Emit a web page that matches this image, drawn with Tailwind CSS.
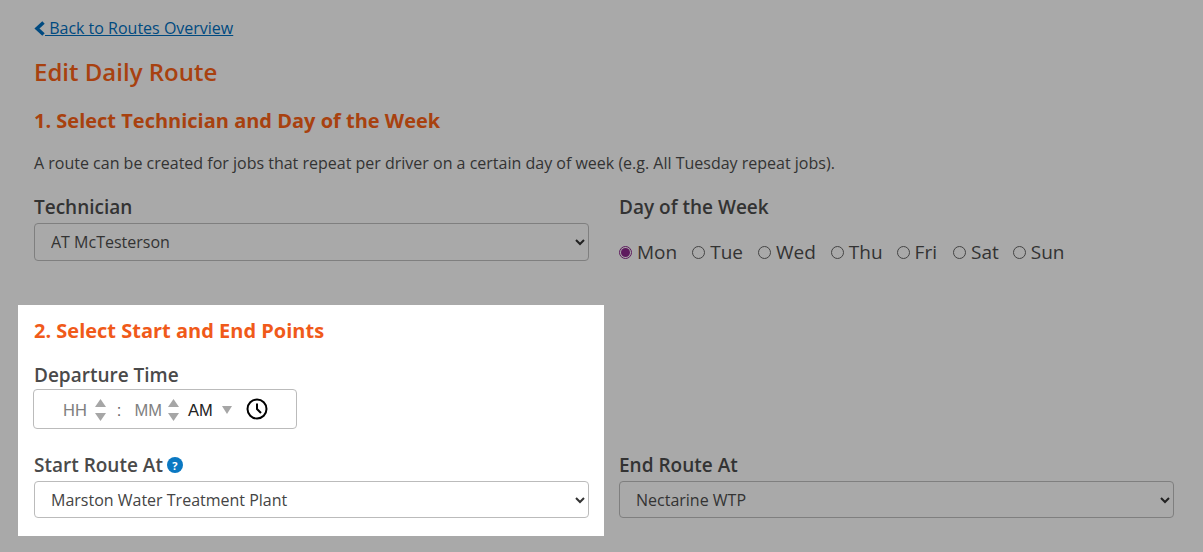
<!DOCTYPE html>
<html lang="en">
  <head>
    <meta charset="UTF-8">
    <title>Edit Daily Route</title>
    <script src="https://cdn.jsdelivr.net/npm/@tailwindcss/browser@4"></script>
  </head>
  <body class="h-[552px] overflow-hidden bg-[#a9a9a9] font-['Open_Sans',sans-serif] text-[#333333]">
    <div class="px-[34px] pt-[18px]">
      <a href="#" class="flex items-center text-[16px] leading-5 text-[#004a80] underline">
        <svg class="h-[15px] w-[11px]" viewBox="0 0 11 15" fill="none" stroke="#004a80" stroke-width="3.5"><path d="M9.5 1.5 3 7.5l6.5 6"></path></svg>
        <span>&nbsp;Back to Routes Overview</span>
      </a>
      <h1 class="mt-[19px] text-[24px] font-semibold leading-[30px] text-[#a8410f]">Edit Daily Route</h1>
      <h2 class="mt-[21px] text-[20px] font-bold leading-[26px] text-[#a8410f]">1. Select Technician and Day of the Week</h2>
      <p class="mt-[19px] text-[16px] leading-5">A route can be created for jobs that repeat per driver on a certain day of week (e.g. All Tuesday repeat jobs).</p>

      <div class="mt-[22px] flex gap-[30px]">
        <div class="w-[555px]">
          <label class="block text-[19px] font-semibold leading-6">Technician</label>
          <div class="relative mt-[4px]">
            <select class="h-[38px] w-full appearance-none rounded border border-[#7f7f7f] bg-transparent px-4 text-[16px]"><option>AT McTesterson</option></select>
            <svg class="absolute right-[4px] top-[16px] h-[7px] w-[10px]" viewBox="0 0 10 7" fill="none" stroke="#222" stroke-width="2"><path d="m1 1 4 4 4-4"></path></svg>
          </div>
        </div>
        <div>
          <label class="block text-[19px] font-semibold leading-6">Day of the Week</label>
          <div class="mt-[21px] flex items-center text-[19px] leading-6">
            <span class="flex h-[13px] w-[13px] items-center justify-center rounded-full border border-[#5e1a5e]"><span class="h-[9px] w-[9px] rounded-full bg-[#5e1a5e]"></span></span>
            <span class="ml-[5px] mr-[15px]">Mon</span>
            <span class="h-[13px] w-[13px] rounded-full border border-[#444444]"></span>
            <span class="ml-[5px] mr-[15px]">Tue</span>
            <span class="h-[13px] w-[13px] rounded-full border border-[#444444]"></span>
            <span class="ml-[5px] mr-[15px]">Wed</span>
            <span class="h-[13px] w-[13px] rounded-full border border-[#444444]"></span>
            <span class="ml-[5px] mr-[14px]">Thu</span>
            <span class="h-[13px] w-[13px] rounded-full border border-[#444444]"></span>
            <span class="ml-[5px] mr-[16px]">Fri</span>
            <span class="h-[13px] w-[13px] rounded-full border border-[#444444]"></span>
            <span class="ml-[5px] mr-[14px]">Sat</span>
            <span class="h-[13px] w-[13px] rounded-full border border-[#444444]"></span>
            <span class="ml-[5px]">Sun</span>
          </div>
        </div>
      </div>

      <div class="mt-[41px] flex items-end gap-[15px]">
        <div class="-ml-4 h-[231px] w-[586px] shrink-0 bg-white pl-4 pr-[15px] pt-[13px] text-[#4a4a4a]">
          <h2 class="text-[20px] font-bold leading-[26px] text-[#f05a1a]">2. Select Start and End Points</h2>
          <label class="mt-[19px] block text-[19px] font-semibold leading-6">Departure Time</label>
          <div class="-ml-px mt-[2px] flex h-10 w-[264px] items-center rounded border border-[#bbbbbb] pl-[29px] font-['Liberation_Sans',sans-serif] text-[16.5px]">
            <span class="mt-[2px] text-[#808080]">HH</span>
            <span class="ml-[8px] mt-[2px] flex flex-col gap-[6px]">
              <svg class="h-[8px] w-[11px]" viewBox="0 0 11 8" fill="#a6a6a6"><path d="M5.5 0 11 8H0z"></path></svg>
              <svg class="h-[8px] w-[11px]" viewBox="0 0 11 8" fill="#a6a6a6"><path d="M0 0h11L5.5 8z"></path></svg>
            </span>
            <span class="ml-[11px] mt-[2px] text-[#666666]">:</span>
            <span class="ml-[13px] mt-[2px] text-[#808080]">MM</span>
            <span class="ml-[6px] mt-[2px] flex flex-col gap-[6px]">
              <svg class="h-[8px] w-[11px]" viewBox="0 0 11 8" fill="#a6a6a6"><path d="M5.5 0 11 8H0z"></path></svg>
              <svg class="h-[8px] w-[11px]" viewBox="0 0 11 8" fill="#a6a6a6"><path d="M0 0h11L5.5 8z"></path></svg>
            </span>
            <span class="ml-[9px] mt-[2px] text-[#222222]">AM</span>
            <svg class="ml-[9px] mt-[2px] h-[8px] w-[10px]" viewBox="0 0 10 8" fill="#a6a6a6"><path d="M0 0h10L5 8z"></path></svg>
            <svg class="ml-[14px] h-[22px] w-[22px]" viewBox="0 0 22 22" fill="none" stroke="#000" stroke-width="2"><circle cx="11" cy="11" r="9.5"></circle><path d="M11 5.5V11l4 4"></path></svg>
          </div>
          <label class="mt-[24px] flex items-center text-[19px] font-semibold leading-6">
            Start Route At
            <span class="ml-[4px] flex h-4 w-4 items-center justify-center rounded-full bg-[#0a78c2] text-[11px] font-bold leading-none text-white">?</span>
          </label>
          <div class="relative mt-[4px]">
            <select class="h-[37px] w-full appearance-none rounded border border-[#bbbbbb] bg-white px-4 text-[16px] text-[#444444]"><option>Marston Water Treatment Plant</option></select>
            <svg class="absolute right-[4px] top-[16px] h-[7px] w-[10px]" viewBox="0 0 10 7" fill="none" stroke="#333" stroke-width="2"><path d="m1 1 4 4 4-4"></path></svg>
          </div>
        </div>
        <div class="mb-[18px] w-[555px] shrink-0">
          <label class="block text-[19px] font-semibold leading-6">End Route At</label>
          <div class="relative mt-[4px]">
            <select class="h-[37px] w-full appearance-none rounded border border-[#7f7f7f] bg-transparent px-4 text-[16px]"><option>Nectarine WTP</option></select>
            <svg class="absolute right-[4px] top-[16px] h-[7px] w-[10px]" viewBox="0 0 10 7" fill="none" stroke="#222" stroke-width="2"><path d="m1 1 4 4 4-4"></path></svg>
          </div>
        </div>
      </div>
    </div>
  </body>
</html>
